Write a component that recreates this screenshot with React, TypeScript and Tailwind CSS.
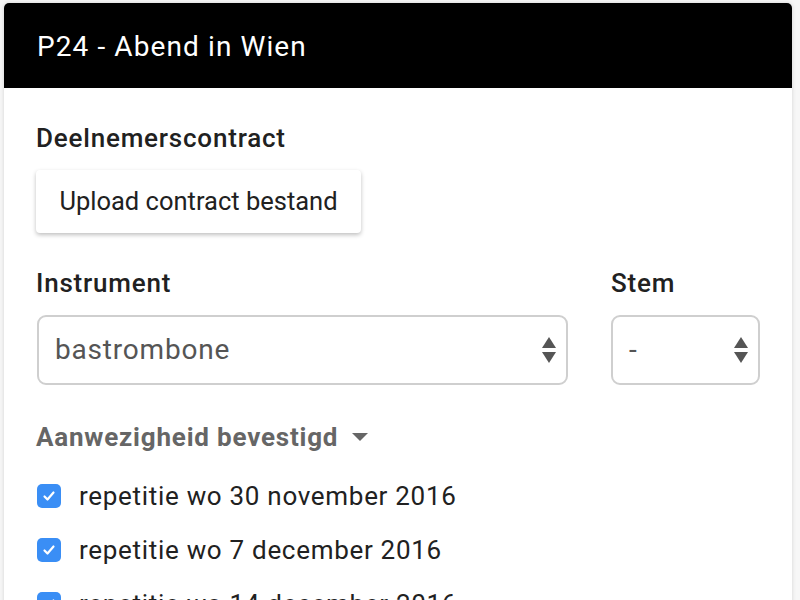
import React from "react";

const rehearsals = [
  "repetitie wo 30 november 2016",
  "repetitie wo 7 december 2016",
  "repetitie wo 14 december 2016",
];

const SelectArrows = () => (
  <svg width="14" height="28" viewBox="0 0 14 28" className="shrink-0">
    <path d="M7 1 L14 12 L0 12 Z" fill="#555555" />
    <path d="M0 16 L14 16 L7 27 Z" fill="#555555" />
  </svg>
);

const FakeSelect = ({ value, className }: { value: string; className?: string }) => (
  <div
    className={`h-[70px] flex items-center justify-between pl-[16px] pr-[10px] border-2 border-[#cfcfcf] rounded-[9px] bg-white ${className ?? ""}`}
  >
    <span className="text-[28px] tracking-[0.8px] text-[#555555]">{value}</span>
    <SelectArrows />
  </div>
);

const Checkbox = () => (
  <div className="w-[24px] h-[24px] rounded-[5px] bg-[#3a8ef5] flex items-center justify-center shrink-0">
    <svg width="16" height="16" viewBox="0 0 16 16">
      <path d="M3.5 8.5 L6.5 11.5 L12.5 4.5" fill="none" stroke="white" strokeWidth="2.2" strokeLinecap="round" strokeLinejoin="round" />
    </svg>
  </div>
);

export default function App() {
  return (
    <div
      className="w-[800px] h-[600px] overflow-hidden bg-[#f7f7f7] pt-[3px] pl-[4px] pr-[8px]"
      style={{ fontFamily: "Roboto, 'Noto Sans', sans-serif" }}
    >
      <div className="bg-white rounded-t-[5px] shadow-[0_0_4px_rgba(0,0,0,0.15)] h-[700px]">
        {/* Header */}
        <div className="h-[85px] bg-black rounded-t-[5px] flex items-center px-[33px] pt-[3px]">
          <h1 className="text-white text-[28px] tracking-[1.1px] leading-none">P24 - Abend in Wien</h1>
        </div>

        <div className="px-[32px] pt-[34px]">
          {/* Contract */}
          <h2 className="text-[26px] tracking-[0.8px] leading-[32px] font-medium text-[#212121]">Deelnemerscontract</h2>
          <button className="mt-[16px] h-[63px] w-[325px] rounded-[4px] bg-white text-[25.5px] text-[#212121] shadow-[0_2px_4px_rgba(0,0,0,0.25)]">
            Upload contract bestand
          </button>

          {/* Instrument / Stem */}
          <div className="mt-[34px] flex gap-[44px]">
            <div className="flex-1 flex flex-col">
              <label className="text-[26px] tracking-[0.8px] leading-[32px] font-medium text-[#212121]">Instrument</label>
              <FakeSelect value="bastrombone" className="mt-[16px] ml-[1px]" />
            </div>
            <div className="w-[148px] flex flex-col">
              <label className="text-[26px] tracking-[0.8px] leading-[32px] font-medium text-[#212121] -ml-[1px]">Stem</label>
              <FakeSelect value="-" className="mt-[16px] -ml-[1px]" />
            </div>
          </div>

          {/* Attendance */}
          <div className="mt-[36px] flex items-center gap-[14px]">
            <span className="text-[26px] tracking-[0.8px] leading-[32px] font-bold text-[#666666]">Aanwezigheid bevestigd</span>
            <svg width="16" height="9" viewBox="0 0 16 9">
              <path d="M0 0 L16 0 L8 8 Z" fill="#666666" />
            </svg>
          </div>

          <ul className="mt-[27px] flex flex-col gap-[22px]">
            {rehearsals.map((r) => (
              <li key={r} className="flex items-center gap-[18px] ml-[1px]">
                <Checkbox />
                <span className="text-[26px] tracking-[0.7px] leading-[32px] text-[#212121]">{r}</span>
              </li>
            ))}
          </ul>
        </div>
      </div>
    </div>
  );
}
